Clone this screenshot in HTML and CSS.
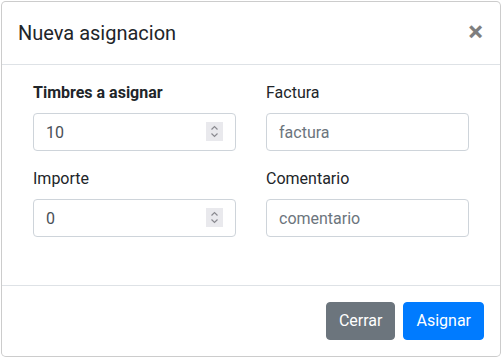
FILE: index.html
```html
<!DOCTYPE html>
<html lang="es">
<head>
    <meta charset="UTF-8" />
    <title>Nueva asignacion</title>
    <link rel="stylesheet" href="styles.css">
</head>
<body>
<div class="modal">
    <div class="modal-header">
        <h5 class="modal-title">Nueva asignacion</h5>
        <button type="button" class="close">&times;</button>
    </div>
    <div class="modal-body">
        <form class="asignacion-form">
            <div class="form-group">
                <label class="bold" for="timbres">Timbres a asignar</label>
                <div class="number-field">
                    <input type="number" id="timbres" class="form-control" value="10" />
                    <span class="spin">
                        <svg width="17" height="19" viewBox="0 0 17 19">
                            <path d="M5.5 7.5 L8.5 4.5 L11.5 7.5 M5.5 11.5 L8.5 14.5 L11.5 11.5" fill="none" stroke="#8a8a90" stroke-width="1.2"/>
                        </svg>
                    </span>
                </div>
            </div>
            <div class="form-group">
                <label for="factura">Factura</label>
                <input type="text" id="factura" class="form-control" placeholder="factura" />
            </div>
            <div class="form-group">
                <label for="importe">Importe</label>
                <div class="number-field">
                    <input type="number" id="importe" class="form-control" value="0" />
                    <span class="spin">
                        <svg width="17" height="19" viewBox="0 0 17 19">
                            <path d="M5.5 7.5 L8.5 4.5 L11.5 7.5 M5.5 11.5 L8.5 14.5 L11.5 11.5" fill="none" stroke="#8a8a90" stroke-width="1.2"/>
                        </svg>
                    </span>
                </div>
            </div>
            <div class="form-group">
                <label for="comentario">Comentario</label>
                <input type="text" id="comentario" class="form-control" placeholder="comentario" />
            </div>
        </form>
    </div>
    <div class="modal-footer">
        <button type="button" class="btn btn-secondary">Cerrar</button>
        <button type="button" class="btn btn-primary">Asignar</button>
    </div>
</div>
</body>
</html>
```

FILE: styles.css
```css
body {
    font-family: Roboto, 'Liberation Sans', sans-serif;
    font-size: 16px;
    line-height: 1.5;
    color: #212529;
    margin: 0;
    padding: 1px 0 0 1px;
    background: #fff;
}

.modal {
    width: 500px;
    box-sizing: border-box;
    background: #fff;
    border: 1px solid rgba(0, 0, 0, 0.2);
    border-radius: 4.8px;
}

.modal-header {
    display: flex;
    align-items: flex-start;
    justify-content: space-between;
    padding: 16px;
    border-bottom: 1px solid #dee2e6;
}

.modal-title {
    margin: 0;
    font-size: 20px;
    font-weight: 400;
    line-height: 1.5;
}

.close {
    padding: 16px;
    margin: -16px -15px -16px auto;
    background: transparent;
    border: 0;
    font-family: inherit;
    font-size: 28px;
    font-weight: 700;
    line-height: 1;
    color: #000;
    opacity: 0.5;
    text-shadow: 0 1px 0 #fff;
    cursor: pointer;
}

.modal-body {
    padding: 16px 16px 32px;
}

.asignacion-form {
    display: grid;
    grid-template-columns: 1fr 1fr;
    column-gap: 30px;
    padding: 0 15px;
}

.form-group {
    margin-bottom: 16px;
}

label {
    display: inline-block;
    margin-bottom: 8px;
}

.bold {
    font-weight: 700;
}

.form-control {
    display: block;
    width: 100%;
    height: 38px;
    box-sizing: border-box;
    padding: 6px 12px;
    font-family: inherit;
    font-size: 16px;
    line-height: 1.5;
    color: #495057;
    background: #fff;
    border: 1px solid #ced4da;
    border-radius: 4px;
}

.form-control::placeholder {
    color: #6c757d;
}

/* flechas del input numerico, dibujadas a mano */
.number-field {
    position: relative;
}

input[type="number"]::-webkit-inner-spin-button {
    -webkit-appearance: none;
    margin: 0;
}

.spin {
    position: absolute;
    top: 9px;
    right: 13px;
    width: 17px;
    height: 19px;
    background: #e9e9ed;
}

.spin svg {
    display: block;
}

.modal-footer {
    display: flex;
    justify-content: flex-end;
    align-items: center;
    padding: 12px;
    border-top: 1px solid #dee2e6;
}

.btn {
    margin: 4px;
    padding: 6px 12px;
    font-family: inherit;
    font-size: 16px;
    line-height: 1.5;
    color: #fff;
    border: 1px solid transparent;
    border-radius: 4px;
    cursor: pointer;
}

.btn-secondary {
    background-color: #6c757d;
    border-color: #6c757d;
}

.btn-primary {
    background-color: #007bff;
    border-color: #007bff;
}
```
